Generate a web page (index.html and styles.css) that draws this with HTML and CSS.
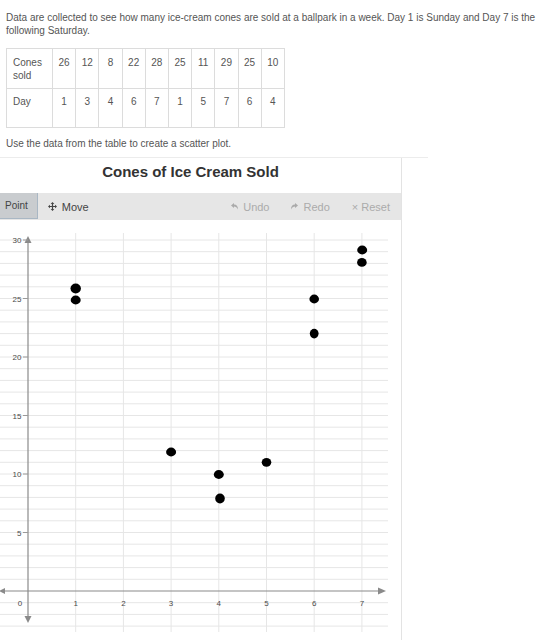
FILE: index.html
```html
<!DOCTYPE html>
<html>
<head>
<meta charset="utf-8">
<link rel="stylesheet" href="styles.css">
</head>
<body>
<div class="page">
  <p class="intro">Data are collected to see how many ice-cream cones are sold at a ballpark in a week. Day 1 is Sunday and Day 7 is the following Saturday.</p>
  <table class="data">
    <tr class="row1">
      <th>Cones sold</th>
      <td>26</td><td>12</td><td>8</td><td>22</td><td>28</td><td>25</td><td>11</td><td>29</td><td>25</td><td>10</td>
    </tr>
    <tr class="row2">
      <th>Day</th>
      <td>1</td><td>3</td><td>4</td><td>6</td><td>7</td><td>1</td><td>5</td><td>7</td><td>6</td><td>4</td>
    </tr>
  </table>
  <p class="prompt">Use the data from the table to create a scatter plot.</p>
</div>
<div class="graph-section">
  <div class="panel">
    <div class="title">Cones of Ice Cream Sold</div>
    <div class="toolbar">
      <div class="tool active">Point</div>
      <div class="tool">
        <svg class="ico" width="9" height="9" viewBox="0 0 9 9"><path d="M4.5 0 L6.3 2 H5.1 V3.9 H7 V2.7 L9 4.5 L7 6.3 V5.1 H5.1 V7 H6.3 L4.5 9 L2.7 7 H3.9 V5.1 H2 V6.3 L0 4.5 L2 2.7 V3.9 H3.9 V2 H2.7 Z" fill="#444"/></svg>
        Move
      </div>
      <div class="spacer"></div>
      <div class="tool disabled">
        <svg class="ico" width="7" height="7" viewBox="0 0 7 7"><path d="M0 2.5 L3 0 V1.6 C5.5 1.6 7 3.5 7 6.5 C6 4.6 4.8 3.6 3 3.6 V5 Z" fill="#aaa"/></svg>
        Undo
      </div>
      <div class="tool disabled">
        <svg class="ico" width="7" height="7" viewBox="0 0 7 7"><path d="M7 2.5 L4 0 V1.6 C1.5 1.6 0 3.5 0 6.5 C1 4.6 2.2 3.6 4 3.6 V5 Z" fill="#aaa"/></svg>
        Redo
      </div>
      <div class="tool disabled">× Reset</div>
    </div>
    <svg class="plot" width="421" height="420" viewBox="-20 220 421 420">
      <g stroke="#e6e6e6" stroke-width="1">
        <line x1="75.7" y1="233" x2="75.7" y2="632"/>
        <line x1="123.4" y1="233" x2="123.4" y2="632"/>
        <line x1="171.1" y1="233" x2="171.1" y2="632"/>
        <line x1="218.8" y1="233" x2="218.8" y2="632"/>
        <line x1="266.5" y1="233" x2="266.5" y2="632"/>
        <line x1="314.2" y1="233" x2="314.2" y2="632"/>
        <line x1="361.9" y1="233" x2="361.9" y2="632"/>
      </g>
      <g stroke="#e6e6e6" stroke-width="1">
        <line x1="-20" y1="240" x2="388" y2="240"/>
        <line x1="-20" y1="251.7" x2="388" y2="251.7"/>
        <line x1="-20" y1="263.4" x2="388" y2="263.4"/>
        <line x1="-20" y1="275.1" x2="388" y2="275.1"/>
        <line x1="-20" y1="286.8" x2="388" y2="286.8"/>
        <line x1="-20" y1="298.5" x2="388" y2="298.5"/>
        <line x1="-20" y1="310.2" x2="388" y2="310.2"/>
        <line x1="-20" y1="321.9" x2="388" y2="321.9"/>
        <line x1="-20" y1="333.6" x2="388" y2="333.6"/>
        <line x1="-20" y1="345.3" x2="388" y2="345.3"/>
        <line x1="-20" y1="357" x2="388" y2="357"/>
        <line x1="-20" y1="368.7" x2="388" y2="368.7"/>
        <line x1="-20" y1="380.4" x2="388" y2="380.4"/>
        <line x1="-20" y1="392.1" x2="388" y2="392.1"/>
        <line x1="-20" y1="403.8" x2="388" y2="403.8"/>
        <line x1="-20" y1="415.5" x2="388" y2="415.5"/>
        <line x1="-20" y1="427.2" x2="388" y2="427.2"/>
        <line x1="-20" y1="438.9" x2="388" y2="438.9"/>
        <line x1="-20" y1="450.6" x2="388" y2="450.6"/>
        <line x1="-20" y1="462.3" x2="388" y2="462.3"/>
        <line x1="-20" y1="474" x2="388" y2="474"/>
        <line x1="-20" y1="485.7" x2="388" y2="485.7"/>
        <line x1="-20" y1="497.4" x2="388" y2="497.4"/>
        <line x1="-20" y1="509.1" x2="388" y2="509.1"/>
        <line x1="-20" y1="520.8" x2="388" y2="520.8"/>
        <line x1="-20" y1="532.5" x2="388" y2="532.5"/>
        <line x1="-20" y1="544.2" x2="388" y2="544.2"/>
        <line x1="-20" y1="555.9" x2="388" y2="555.9"/>
        <line x1="-20" y1="567.6" x2="388" y2="567.6"/>
        <line x1="-20" y1="579.3" x2="388" y2="579.3"/>
        <line x1="-20" y1="602.7" x2="388" y2="602.7"/>
        <line x1="-20" y1="614.4" x2="388" y2="614.4"/>
        <line x1="-20" y1="626.1" x2="388" y2="626.1"/>
      </g>
      <g stroke="#8a8a8a" stroke-width="1.2" fill="#8a8a8a">
        <line x1="3" y1="591" x2="380" y2="591"/>
        <path d="M386 591 L378 587.5 L378 594.5 Z" stroke="none"/>
        <path d="M-1 591 L5 588 L5 594 Z" stroke="none"/>
        <line x1="28" y1="242" x2="28" y2="617"/>
        <path d="M28 236 L24.5 243 L31.5 243 Z" stroke="none"/>
        <path d="M28 623 L24.5 616 L31.5 616 Z" stroke="none"/>
      </g>
      <g stroke="#9a9a9a" stroke-width="1">
        <line x1="23" y1="240" x2="28" y2="240"/>
        <line x1="23" y1="298.5" x2="28" y2="298.5"/>
        <line x1="23" y1="357" x2="28" y2="357"/>
        <line x1="23" y1="415.5" x2="28" y2="415.5"/>
        <line x1="23" y1="474" x2="28" y2="474"/>
        <line x1="23" y1="532.5" x2="28" y2="532.5"/>
      </g>
      <g class="ylab" text-anchor="end">
        <text x="21.5" y="243">30</text>
        <text x="21.5" y="301.5">25</text>
        <text x="21.5" y="360">20</text>
        <text x="21.5" y="418.5">15</text>
        <text x="21.5" y="477">10</text>
        <text x="21.5" y="535.5">5</text>
      </g>
      <g class="xlab" text-anchor="middle">
        <text x="20" y="606">0</text>
        <text x="75.7" y="606">1</text>
        <text x="123.4" y="606">2</text>
        <text x="171.1" y="606">3</text>
        <text x="218.8" y="606">4</text>
        <text x="266.5" y="606">5</text>
        <text x="314.2" y="606">6</text>
        <text x="361.9" y="606">7</text>
      </g>
      <g fill="#000">
        <ellipse cx="75.7" cy="288.5" rx="5.2" ry="5"/>
        <ellipse cx="75.7" cy="300" rx="5" ry="4.4"/>
        <ellipse cx="171.1" cy="452" rx="5" ry="4.4"/>
        <ellipse cx="220" cy="498.5" rx="4.8" ry="5"/>
        <ellipse cx="218.8" cy="474.5" rx="5" ry="4.4"/>
        <ellipse cx="266.5" cy="462.3" rx="4.8" ry="4.4"/>
        <ellipse cx="314.2" cy="333.6" rx="4.4" ry="4.8"/>
        <ellipse cx="314.2" cy="299" rx="4.8" ry="4.4"/>
        <ellipse cx="361.9" cy="262.4" rx="4.8" ry="4.4"/>
        <ellipse cx="362.2" cy="250" rx="5" ry="4.4"/>
      </g>
    </svg>
  </div>
</div>
</body>
</html>
```

FILE: styles.css
```css
html, body {
  margin: 0;
  padding: 0;
  background: #fff;
}

body {
  font-family: "Liberation Sans", Arial, sans-serif;
  color: #555;
  font-size: 10px;
  overflow: hidden;
  width: 544px;
  height: 640px;
}

.page {
  padding: 11px 0 0 6px;
}

.intro {
  margin: 0;
  line-height: 13px;
  width: 536px;
}

.data {
  border-collapse: collapse;
  margin-top: 11px;
  width: 279px;
  table-layout: fixed;
}

.data th,
.data td {
  border: 1px solid #dcdcdc;
  font-weight: normal;
  vertical-align: top;
  line-height: 13px;
  padding: 5px 0 0;
  text-align: center;
}

.data th {
  text-align: left;
  padding-left: 6px;
  width: 39px;
}

.data .row1 th,
.data .row1 td {
  height: 32px;
  padding-top: 7px;
}

.data .row2 th,
.data .row2 td {
  height: 32px;
  padding-top: 6px;
}

.prompt {
  margin: 9px 0 0;
  line-height: 13px;
}

.graph-section {
  margin: 7px 0 0 -20px;
  width: 448px;
  border-top: 1px solid #ececec;
}

.panel {
  width: 421px;
  border-right: 1px solid #e3e3e3;
  height: 483px;
}

.title {
  text-align: center;
  font-weight: bold;
  font-size: 15px;
  line-height: 18px;
  color: #333;
  padding: 5px 0 12px;
}

.toolbar {
  display: flex;
  align-items: stretch;
  background: #e6e6e6;
  height: 27px;
  padding-left: 15px;
  padding-right: 0;
}

.tool {
  display: flex;
  align-items: center;
  gap: 5px;
  padding: 0 10px;
  color: #444;
  font-size: 11px;
}

.tool.active {
  background: #c9cccf;
  border: 1px solid #a9b7c4;
  border-top: none;
  box-sizing: border-box;
  height: 26px;
  padding: 0 9px;
  font-size: 10px;
}

.tool.disabled {
  color: #ababab;
  padding: 0 11px;
}

.spacer {
  flex: 1;
}

.ico {
  display: block;
}

.plot {
  display: block;
}

.ylab text,
.xlab text {
  font-family: "Liberation Sans", Arial, sans-serif;
  font-size: 8px;
  fill: #4a4a4a;
}
```
